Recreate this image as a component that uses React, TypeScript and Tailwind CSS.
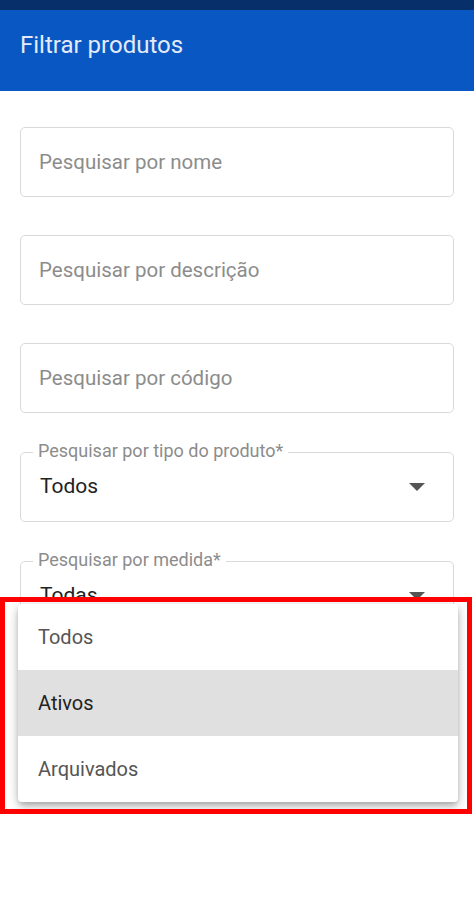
import { useState } from 'react';

const textFields = ['Pesquisar por nome', 'Pesquisar por descrição', 'Pesquisar por código'];

function TextField({ placeholder }: { placeholder: string }) {
  return (
    <input
      placeholder={placeholder}
      className="h-[70px] w-full rounded-[5px] border border-[#dadada] px-[18px] text-[20.5px] text-[#222] outline-none placeholder:text-[#8c8c8c]"
    />
  );
}

function SelectField({ label, value }: { label: string; value: string }) {
  return (
    <div className="relative h-[70px] w-full rounded-[5px] border border-[#dadada]">
      {/* floating label over the outline */}
      <span className="absolute left-[12px] top-[-13px] bg-white px-[5px] text-[18px] leading-[22px] text-[#8c8c8c]">
        {label}
      </span>
      <div className="flex h-full items-center justify-between pl-[19px] pr-[28px]">
        <span className="text-[21px] text-[#222]">{value}</span>
        <svg width="16" height="8" viewBox="0 0 16 8">
          <path d="M0 0h16L8 8z" fill="#555" />
        </svg>
      </div>
    </div>
  );
}

export default function App() {
  const [hovered] = useState('Ativos');
  const options = ['Todos', 'Ativos', 'Arquivados'];

  return (
    <div className="relative min-h-[902px] bg-white" style={{ fontFamily: 'Roboto, "Noto Sans", sans-serif' }}>
      <div className="h-[10px] bg-[#072f6a]" />
      <header className="flex h-[81px] items-center bg-[#0957c3] px-[20px] pb-[12px]">
        <h1 className="text-[24px] font-normal text-[#e3ebf8]">Filtrar produtos</h1>
      </header>

      <main className="flex flex-col gap-[38px] px-[20px] pt-[36px]">
        {textFields.map((p) => (
          <TextField key={p} placeholder={p} />
        ))}
        <div className="mt-[1px]">
          <SelectField label="Pesquisar por tipo do produto*" value="Todos" />
        </div>
        <div className="mt-[1px]">
          <SelectField label="Pesquisar por medida*" value="Todas" />
        </div>
      </main>

      {/* Open dropdown menu */}
      <ul className="absolute left-[18px] top-[604px] w-[440px] overflow-hidden rounded-[4px] bg-white shadow-[0_3px_5px_-1px_rgba(0,0,0,0.2),0_6px_10px_0_rgba(0,0,0,0.14),0_1px_14px_0_rgba(0,0,0,0.12)]">
        {options.map((o) => (
          <li
            key={o}
            className={
              o === hovered
                ? 'flex h-[66px] items-center bg-[#e0e0e0] px-[20px] text-[20px] text-[#222]'
                : 'flex h-[66px] items-center px-[20px] text-[20px] text-[#555]'
            }
          >
            {o}
          </li>
        ))}
      </ul>

      {/* Annotation highlight */}
      <div className="pointer-events-none absolute left-0 top-[597px] h-[217px] w-[472px] border-[5px] border-[#ff0000]" />
    </div>
  );
}
